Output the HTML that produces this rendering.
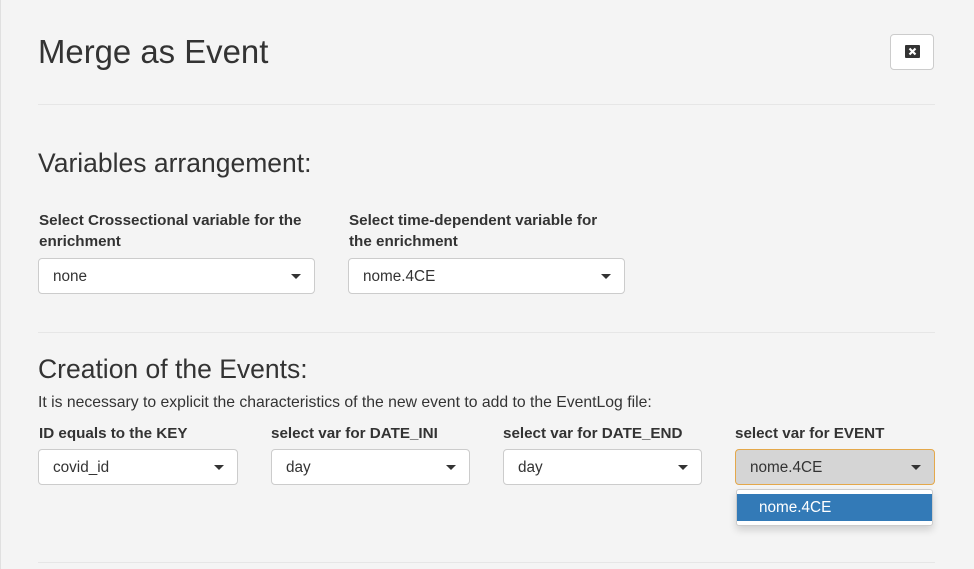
<!DOCTYPE html><html><head><style>
body{margin:0;width:974px;height:569px;background:#f4f4f4;font-family:"Liberation Sans",sans-serif;color:#333;position:relative;overflow:hidden}
.a{position:absolute}
.hr{position:absolute;left:38px;width:897px;height:1px;background:#e6e6e6}
.lab{position:absolute;font-weight:bold;font-size:15.2px;line-height:21px}
.sel{position:absolute;height:34px;background:#fff;border:1px solid #ccc;border-radius:4px;box-sizing:border-box;font-size:15.3px;line-height:32px;padding-left:14px;padding-top:1px}
.sel:after{content:"";position:absolute;right:13px;top:15px;border-left:5px solid transparent;border-right:5px solid transparent;border-top:5px solid #333}
</style></head><body>
<div class="a" style="left:0;top:0;width:1px;height:569px;background:#e0e0e0"></div>
<div class="a" style="left:38px;top:33px;font-size:32.9px;line-height:38px">Merge as Event</div>
<div class="a" style="left:890px;top:34px;width:44px;height:36px;box-sizing:border-box;border:1px solid #ccc;border-radius:4px;background:#fff"><svg style="position:absolute;left:14px;top:10px" width="15" height="13" viewBox="0 0 15 13"><rect width="15" height="13" rx="1" fill="#333"/><path d="M4.5 3.5l6 6M10.5 3.5l-6 6" stroke="#fff" stroke-width="2.2"/></svg></div>
<div class="hr" style="top:104px"></div>
<div class="a" style="left:38px;top:148px;font-size:26.5px;line-height:30px">Variables arrangement:</div>
<div class="lab" style="left:39px;top:210px">Select Crossectional variable for the<br>enrichment</div>
<div class="lab" style="left:349px;top:210px">Select time-dependent variable for<br>the enrichment</div>
<div class="sel" style="left:38px;top:258px;width:277px;height:36px;line-height:34px">none</div>
<div class="sel" style="left:348px;top:258px;width:277px;height:36px;line-height:34px">nome.4CE</div>
<div class="hr" style="top:332px"></div>
<div class="a" style="left:38px;top:354px;font-size:26.5px;line-height:30px">Creation of the Events:</div>
<div class="a" style="left:38px;top:394px;font-size:15.75px">It is necessary to explicit the characteristics of the new event to add to the EventLog file:</div>
<div class="lab" style="left:39px;top:423px">ID equals to the KEY</div>
<div class="lab" style="left:271px;top:423px">select var for DATE_INI</div>
<div class="lab" style="left:503px;top:423px">select var for DATE_END</div>
<div class="lab" style="left:735px;top:423px">select var for EVENT</div>
<div class="sel" style="left:38px;top:449px;width:200px;height:36px;line-height:34px">covid_id</div>
<div class="sel" style="left:271px;top:449px;width:199px;height:36px;line-height:34px">day</div>
<div class="sel" style="left:503px;top:449px;width:199px;height:36px;line-height:34px">day</div>
<div class="sel" style="left:735px;top:449px;width:200px;height:36px;line-height:34px;background:#d5d5d5;border-color:#e4a84b">nome.4CE</div>
<div class="a" style="left:736px;top:489px;width:197px;height:37px;background:#fff;border:1px solid #ccc;border-radius:3px;box-sizing:border-box;box-shadow:0 4px 8px rgba(0,0,0,.15)"><div style="margin-top:4px;height:27px;background:#337ab7;color:#fff;font-size:15.3px;line-height:28px;padding-left:22px">nome.4CE</div></div>
<div class="hr" style="top:562px"></div>
</body></html>
